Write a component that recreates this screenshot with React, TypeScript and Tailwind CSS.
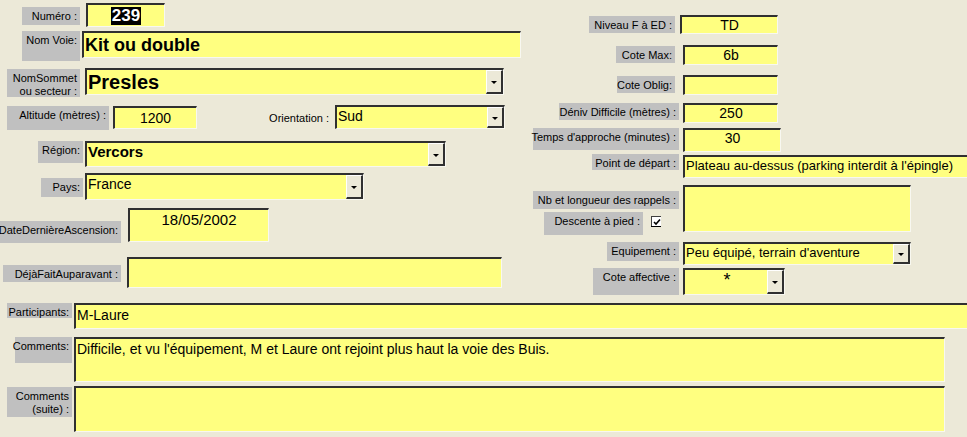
import type { ReactNode } from 'react';

type Box = { x: number; y: number; w: number; h: number };

const pos = (b: Box) => ({ left: b.x, top: b.y, width: b.w, height: b.h });

const Label = ({ b, children, plain = false }: { b: Box; children: ReactNode; plain?: boolean }) => (
  <div
    className={`absolute flex justify-end text-right whitespace-nowrap text-[11px] leading-[13px] pr-[3px] pt-[3px] text-black ${plain ? '' : 'bg-[#c0c0c0]'}`}
    style={pos(b)}
  >
    <div>{children}</div>
  </div>
);

const Field = ({ b, children, className = '' }: { b: Box; children?: ReactNode; className?: string }) => (
  <div
    className={`absolute overflow-hidden whitespace-nowrap bg-[#ffff80] border-t-2 border-l-2 border-r border-b border-t-[#303030] border-l-[#303030] border-r-[#f8f8f0] border-b-[#f8f8f0] text-black ${className}`}
    style={pos(b)}
  >
    {children}
  </div>
);

const DropButton = () => (
  <div className="absolute right-0 top-0 bottom-0 w-[17px] bg-[#ece9d8] border-t border-l border-r-2 border-b-2 border-t-white border-l-white border-r-[#303030] border-b-[#303030] flex items-center justify-center">
    <div className="w-0 h-0 border-l-[3px] border-r-[3px] border-t-[3px] border-l-transparent border-r-transparent border-t-black mt-[2px]" />
  </div>
);

const Combo = ({ b, children, className = '' }: { b: Box; children?: ReactNode; className?: string }) => (
  <Field b={b} className={className}>
    {children}
    <DropButton />
  </Field>
);

export default function App() {
  return (
    <div
      className="relative w-[967px] h-[437px] overflow-hidden bg-[#ece9d8]"
      style={{ fontFamily: '"Liberation Sans", Arial, sans-serif' }}
    >
      {/* left column */}
      <Label b={{ x: 22, y: 7, w: 58, h: 18 }}>Numéro :</Label>
      <Field b={{ x: 86, y: 3, w: 79, h: 24 }} className="flex items-center justify-center">
        <span className="bg-black text-white font-bold text-[17px] leading-[18px] px-[1px]">239</span>
      </Field>

      <Label b={{ x: 22, y: 31, w: 58, h: 30 }}>Nom Voie:</Label>
      <Field b={{ x: 82, y: 31, w: 439, h: 27 }} className="font-bold text-[18px] leading-[24px] pl-[1px]">
        Kit ou double
      </Field>

      <Label b={{ x: 7, y: 69, w: 73, h: 28 }}>
        NomSommet
        <br />
        ou secteur :
      </Label>
      <Combo b={{ x: 85, y: 68, w: 419, h: 27 }} className="font-bold text-[20px] leading-[25px] pl-[1px]">
        Presles
      </Combo>

      <Label b={{ x: 7, y: 106, w: 102, h: 24 }}>Altitude (mètres) :</Label>
      <Field b={{ x: 113, y: 106, w: 84, h: 23 }} className="text-center text-[14px] leading-[20px]">
        1200
      </Field>

      <Label plain b={{ x: 262, y: 109, w: 70, h: 18 }}>Orientation :</Label>
      <Combo b={{ x: 335, y: 105, w: 170, h: 24 }} className="text-[14px] leading-[18px] pl-[1px]">
        Sud
      </Combo>

      <Label b={{ x: 38, y: 141, w: 45, h: 22 }}>Région:</Label>
      <Combo b={{ x: 85, y: 141, w: 361, h: 26 }} className="font-bold text-[15px] leading-[17px] pl-[1px]">
        Vercors
      </Combo>

      <Label b={{ x: 41, y: 178, w: 42, h: 19 }}>Pays:</Label>
      <Combo b={{ x: 85, y: 173, w: 279, h: 27 }} className="text-[14px] leading-[18px] pl-[1px]">
        France
      </Combo>

      <Label b={{ x: 0, y: 221, w: 121, h: 22 }}>DateDernièreAscension:</Label>
      <Field b={{ x: 128, y: 208, w: 141, h: 34 }} className="text-center text-[15px] leading-[20px]">
        18/05/2002
      </Field>

      <Label b={{ x: 3, y: 265, w: 118, h: 17 }}>DéjàFaitAuparavant :</Label>
      <Field b={{ x: 127, y: 257, w: 375, h: 31 }} />

      {/* right column */}
      <Label b={{ x: 589, y: 16, w: 86, h: 17 }}>Niveau F à ED :</Label>
      <Field b={{ x: 680, y: 15, w: 98, h: 19 }} className="text-center text-[14px] leading-[16px]">
        TD
      </Field>

      <Label b={{ x: 616, y: 46, w: 59, h: 17 }}>Cote Max:</Label>
      <Field b={{ x: 683, y: 45, w: 95, h: 20 }} className="text-center text-[14px] leading-[17px]">
        6b
      </Field>

      <Label b={{ x: 617, y: 76, w: 58, h: 17 }}>Cote Oblig:</Label>
      <Field b={{ x: 683, y: 75, w: 95, h: 20 }} />

      <Label b={{ x: 559, y: 103, w: 120, h: 17 }}>Déniv Difficile (mètres) :</Label>
      <Field b={{ x: 683, y: 103, w: 95, h: 20 }} className="text-center text-[14px] leading-[17px]">
        250
      </Field>

      <Label b={{ x: 533, y: 128, w: 146, h: 22 }}>Temps d'approche (minutes) :</Label>
      <Field b={{ x: 683, y: 128, w: 98, h: 24 }} className="text-center text-[14px] leading-[17px]">
        30
      </Field>

      <Label b={{ x: 592, y: 154, w: 87, h: 16 }}>Point de départ :</Label>
      <Field b={{ x: 683, y: 155, w: 290, h: 23 }} className="text-[13px] leading-[18px] pl-[1px]">
        Plateau au-dessus (parking interdit à l'épingle)
      </Field>

      <Label b={{ x: 533, y: 191, w: 146, h: 18 }}>Nb et longueur des rappels :</Label>
      <Field b={{ x: 683, y: 185, w: 228, h: 47 }} />

      <Label b={{ x: 544, y: 212, w: 99, h: 23 }}>Descente à pied :</Label>
      <div className="absolute left-[651px] top-[216px] w-[10px] h-[10px] bg-white border-t border-l border-t-[#404040] border-l-[#404040] flex items-center justify-center">
        <svg width="8" height="8" viewBox="0 0 8 8">
          <path d="M1 4 L3 6 L7 1.5" fill="none" stroke="black" strokeWidth="1.6" />
        </svg>
      </div>
      <div className="absolute left-[651px] top-[226px] w-[10px] h-[1px] bg-black" />

      <Label b={{ x: 607, y: 242, w: 72, h: 19 }}>Equipement :</Label>
      <Combo b={{ x: 683, y: 242, w: 228, h: 23 }} className="text-[13px] leading-[18px] pl-[1px]">
        Peu équipé, terrain d'aventure
      </Combo>

      <Label b={{ x: 593, y: 268, w: 86, h: 27 }}>Cote affective :</Label>
      <Combo b={{ x: 683, y: 268, w: 102, h: 27 }} className="text-[18px] leading-[20px]">
        <div className="w-[84px] text-center">*</div>
      </Combo>

      {/* bottom */}
      <Label b={{ x: 7, y: 303, w: 65, h: 15 }}>Participants:</Label>
      <Field b={{ x: 74, y: 303, w: 900, h: 26 }} className="text-[14px] leading-[20px] pl-[1px]">
        M-Laure
      </Field>

      <Label b={{ x: 15, y: 337, w: 57, h: 26 }}>Comments:</Label>
      <Field b={{ x: 74, y: 337, w: 871, h: 45 }} className="text-[14px] leading-[18px] pl-[1px] pt-[1px]">
        Difficile, et vu l'équipement, M et Laure ont rejoint plus haut la voie des Buis.
      </Field>

      <Label b={{ x: 7, y: 387, w: 65, h: 30 }}>
        Comments
        <br />
        (suite) :
      </Label>
      <Field b={{ x: 74, y: 386, w: 871, h: 46 }} />
    </div>
  );
}
